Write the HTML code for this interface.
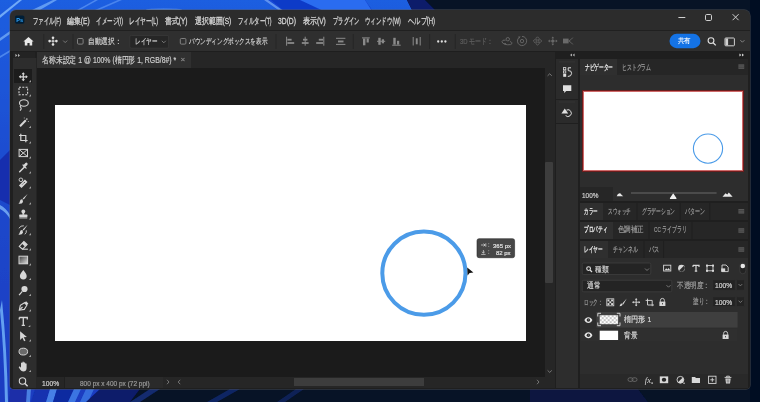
<!DOCTYPE html>
<html><head><meta charset="utf-8">
<style>
*{margin:0;padding:0;box-sizing:border-box}
html,body{width:760px;height:402px;overflow:hidden;background:#0b1730}
body{position:relative;font-family:"Liberation Sans",sans-serif}
.r{position:absolute}
.t{position:absolute;white-space:nowrap;line-height:1;transform-origin:0 0;-webkit-text-stroke:0.2px currentColor}
svg.i{position:absolute;overflow:visible}
</style></head><body>

<svg class="i" style="left:0;top:0" width="760" height="402" viewBox="0 0 760 402">
<defs>
<linearGradient id="wg" x1="0" y1="0" x2="0" y2="1"><stop offset="0" stop-color="#1f5ee0"/><stop offset="0.5" stop-color="#1c48cc"/><stop offset="1" stop-color="#1a3cc0"/></linearGradient>
<filter id="bl" x="-10%" y="-10%" width="120%" height="120%"><feGaussianBlur stdDeviation="0.7"/></filter>
</defs>
<rect width="760" height="402" fill="#071326"/>
<g filter="url(#bl)">
<polygon points="0,0 407,0 414,14 100,402 0,402" fill="url(#wg)"/>
<polygon points="264,0 365,0 374,14 283,14" fill="#1848d8"/>
<polygon points="271,0 365,0 372,10 283,10" fill="#0f3ac8"/>
<polygon points="300,0 365,0 374,14 330,14" fill="#2a6cf0"/>
<polygon points="407,0 425,0 439,14 414,14" fill="#0a1a6a"/>
<path d="M0,15 L19,0 L22,0 L0,18 Z" fill="#8cc4ff" opacity="0.75"/>
<path d="M30,11 L53,0 L57,0 L33,14 Z" fill="#8cc4ff" opacity="0.6"/>
<path d="M77,10 L95,0 L98,0 L80,10 Z" fill="#7ab4ff" opacity="0.5"/>
<path d="M95,10 L118,0 L122,0 L99,10 Z" fill="#7ab4ff" opacity="0.45"/>
<path d="M264,0 L268,0 L285,12 L281,12 Z" fill="#8cc4ff" opacity="0.6"/>
<ellipse cx="164" cy="10" rx="18" ry="1.6" fill="#8cc4ff" opacity="0.45"/>
<path d="M0,38 L10,31 L10,34 L0,41 Z" fill="#8cc4ff" opacity="0.6"/>
<path d="M0,56 L10,50 L10,52 L0,58 Z" fill="#7ab4ff" opacity="0.5"/>
<polygon points="0,160 10,150 10,205 0,200" fill="#142fae"/>
<path d="M0,205 Q6,208 10,215 L10,219 Q6,212 0,209 Z" fill="#8cc4ff" opacity="0.7"/>
<path d="M2,300 Q7,350 8,402 L5,402 Q4,350 0,310 Z" fill="#7cc0ff" opacity="0.75"/><polygon points="10,389 27,389 27,402 9,402" fill="#1a2fa8"/>
<path d="M27,389 L31,389 L30,402 L26,402 Z" fill="#6aaaf8" opacity="0.6"/>
<polygon points="35,389 50,389 46,402 31,402" fill="#1232b0"/>
<path d="M50,389 L57,389 L53,402 L46,402 Z" fill="#5a9cf5" opacity="0.7"/>
<polygon points="57,389 74,389 68,402 53,402" fill="#0e2aa0"/>
<path d="M74,389 L81,389 L75,402 L68,402 Z" fill="#4a8cf0" opacity="0.7"/>
<path d="M86,389 L94,389 L88,402 L80,402 Z" fill="#4a8cf0" opacity="0.6"/>
<polygon points="100,389 140,389 130,402 86,402" fill="#0a1a6a"/>
<path d="M140,402 L160,389 L150,389 L130,402 Z" fill="#1a3aa0" opacity="0.6"/>
<path d="M217,402 L240,389 L230,389 L207,402 Z" fill="#1a3aa0" opacity="0.5"/>
<path d="M285,402 L304,389 L296,389 L277,402 Z" fill="#1a3aa0" opacity="0.4"/>
<polygon points="530,389 638,389 648,402 530,402" fill="#08163f"/>
<polygon points="750,0 760,0 760,402 750,402" fill="#061122"/>
</g>
</svg>
<div class="r" style="left:10px;top:10px;width:740px;height:379px;background:#2c2c2c;border-radius:6px 6px 4px 4px;box-shadow:0 0 0 0.7px rgba(90,90,90,0.55);"></div>
<div class="r" style="left:10px;top:30px;width:740px;height:1px;background:#202020;"></div>
<div class="r" style="left:10px;top:31px;width:740px;height:20px;background:#2f2f2f;"></div>
<div class="r" style="left:10px;top:51px;width:740px;height:1px;background:#1e1e1e;"></div>
<div class="r" style="left:10px;top:52px;width:740px;height:337px;background:#1f1f1f;border-radius:0 0 4px 4px;"></div>
<div class="r" style="left:13px;top:52px;width:22px;height:6px;background:#232323;"></div>
<div class="r" style="left:13px;top:58px;width:23px;height:330px;background:#2d2d2d;"></div>
<div class="r" style="left:36px;top:58px;width:1.5px;height:319px;background:#242424;"></div>
<div class="r" style="left:14px;top:69px;width:18px;height:14px;background:#1c1c1c;"></div>
<div class="r" style="left:37px;top:52px;width:518px;height:16px;background:#262626;"></div>
<div class="r" style="left:37px;top:52px;width:154px;height:16px;background:#303030;"></div>
<div class="r" style="left:37px;top:68px;width:508px;height:309px;background:#1b1b1b;"></div>
<div class="r" style="left:55px;top:105px;width:471px;height:236px;background:#ffffff;"></div>
<div class="r" style="left:545px;top:68px;width:10px;height:309px;background:#262626;"></div>
<div class="r" style="left:545px;top:162px;width:8px;height:121px;background:#3d3d3d;border-radius:1px;"></div>
<div class="r" style="left:36px;top:377px;width:28px;height:11px;background:#262626;"></div>
<div class="r" style="left:65px;top:377px;width:98px;height:11px;background:#2a2a2a;"></div>
<div class="r" style="left:163px;top:377px;width:392px;height:11px;background:#262626;"></div>
<div class="r" style="left:294px;top:378px;width:130px;height:8px;background:#3d3d3d;"></div>
<div class="r" style="left:556px;top:59px;width:22px;height:40px;background:#2b2b2b;"></div>
<div class="r" style="left:556px;top:100px;width:22px;height:23px;background:#2b2b2b;"></div>
<div class="r" style="left:556px;top:124px;width:22px;height:264px;background:#2d2d2d;"></div>
<div class="r" style="left:580px;top:59px;width:168px;height:142px;background:#2d2d2d;"></div>
<div class="r" style="left:580px;top:59px;width:37px;height:16px;background:#2f2f2f;"></div>
<div class="r" style="left:617px;top:59px;width:38px;height:16px;background:#262626;"></div>
<div class="r" style="left:655px;top:59px;width:93px;height:16px;background:#262626;"></div>
<div class="r" style="left:581.6px;top:90px;width:162.6px;height:82.2px;background:#fff;border:1px solid #6e1c1c;box-shadow:inset 0 0 0 1px #cf6a6a;"></div>
<div class="r" style="left:580px;top:187px;width:33px;height:14px;background:#262626;"></div>
<div class="r" style="left:580px;top:203px;width:168px;height:17px;background:#262626;"></div>
<div class="r" style="left:580px;top:203px;width:23px;height:17px;background:#2f2f2f;"></div>
<div class="r" style="left:580px;top:222px;width:168px;height:17px;background:#262626;"></div>
<div class="r" style="left:580px;top:222px;width:33px;height:17px;background:#2f2f2f;"></div>
<div class="r" style="left:580px;top:241px;width:168px;height:17px;background:#262626;"></div>
<div class="r" style="left:580px;top:241px;width:28px;height:17px;background:#2f2f2f;"></div>
<div class="r" style="left:580px;top:258px;width:168px;height:116px;background:#2d2d2d;"></div>
<div class="r" style="left:580px;top:374px;width:168px;height:14px;background:#292929;"></div>
<svg class="i" style="left:0;top:0" width="760" height="402" viewBox="0 0 760 402"><g stroke="#d6d6d6" stroke-width="1.2" fill="none"><path d="M19.8,76.8 H26.8 M23.3,73.3 V80.3"/></g><g fill="#d6d6d6"><path d="M18.8,76.8 l2,-1.8 v3.6z M27.8,76.8 l-2,-1.8 v3.6z M23.3,72.3 l-1.8,2 h3.6z M23.3,81.3 l-1.8,-2 h3.6z"/></g><rect x="19.0" y="87.2" width="8.6" height="7.6" fill="none" stroke="#d6d6d6" stroke-width="1.1" stroke-dasharray="2 1.3"/><g fill="none" stroke="#d6d6d6" stroke-width="1.1"><ellipse cx="23.900000000000002" cy="103" rx="4.4" ry="3.3"/><path d="M20.7,105.4 q-1,1.6 0.2,2.4 q0.9,0.7 -0.9,2.8"/></g><g stroke="#d6d6d6" fill="none"><path d="M20.0,126.3 L25.8,120.3" stroke-width="2"/><path d="M26.8,118.3 v1.6 M26.0,119.1 h1.6 M27.9,121.5 h1 M24.3,117.5 v1" stroke-width="0.7"/></g><g fill="none" stroke="#d6d6d6" stroke-width="1.2"><path d="M20.8,133.7 V140.5 H27.6 M19.0,135.5 H25.8 V142.3"/></g><g fill="none" stroke="#d6d6d6" stroke-width="1"><rect x="19.1" y="149.4" width="8.4" height="7.2"/><path d="M19.1,149.4 L27.5,156.6 M27.5,149.4 L19.1,156.6"/></g><g stroke="#d6d6d6" fill="none" stroke-linecap="round"><path d="M19.7,171.8 L24.5,167" stroke-width="1.5"/><path d="M24.5,165.8 L26.3,164" stroke-width="2.6"/><path d="M23.0,165 L26.1,168.1" stroke-width="1.2"/></g><g fill="#d6d6d6"><path d="M18.9,185.4 L24.900000000000002,179.4 L27.5,182 L21.5,188 Z"/></g><circle cx="20.900000000000002" cy="179.8" r="1.8" fill="none" stroke="#d6d6d6" stroke-width="0.9"/><path d="M22.3,184.5 l1,-1 M23.900000000000002,183 l1,-1" stroke="#2b2b2b" stroke-width="0.8"/><g fill="#d6d6d6"><path d="M27.6,194 L23.8,199.6 L22.7,198.6 Z"/><path d="M22.5,199.2 q-2.2,-0.4 -2.6,2 q-0.3,1.8 -1.5,2.6 q3.6,0.4 4.6,-1.8 z"/></g><g fill="#d6d6d6"><circle cx="23.3" cy="211.4" r="1.9"/><rect x="22.400000000000002" y="212.8" width="1.8" height="2"/><rect x="19.1" y="214.6" width="8.4" height="2.4" rx="0.8"/><rect x="19.3" y="217.4" width="8" height="1"/></g><g fill="#d6d6d6"><path d="M27.6,224.8 L23.8,230.4 L22.7,229.4 Z"/><path d="M22.5,230.0 q-2.2,-0.4 -2.6,2 q-0.3,1.8 -1.5,2.6 q3.6,0.4 4.6,-1.8 z"/></g><path d="M18.8,228.3 q2,-3 5,-2.5 M26.3,230.3 q0.5,2.5 -1.5,4" stroke="#d6d6d6" stroke-width="0.9" fill="none"/><g fill="none" stroke="#d6d6d6" stroke-width="1.1"><path d="M19.3,246.4 L23.900000000000002,241.6 L27.1,244.6 L22.5,249.2 Z"/><path d="M22.5,249.2 H27.9"/></g><path d="M21.8,243.5 L23.900000000000002,241.6 L27.1,244.6 L24.900000000000002,246.6 Z" fill="#d6d6d6"/><defs><linearGradient id="tg" x1="0" y1="0" x2="1" y2="1"><stop offset="0" stop-color="#3a3a3a"/><stop offset="1" stop-color="#e0e0e0"/></linearGradient></defs><rect x="19.0" y="256.2" width="8.6" height="7.6" fill="url(#tg)" stroke="#d6d6d6" stroke-width="1"/><path d="M23.3,270.09999999999997 C24.8,272.2 26.7,274.2 26.7,276.09999999999997 A3.4,3.4 0 0 1 19.900000000000002,276.09999999999997 C19.900000000000002,274.2 21.8,272.2 23.3,270.09999999999997 Z" fill="#d6d6d6"/><circle cx="24.5" cy="289.0" r="3.1" fill="#d6d6d6"/><path d="M22.3,291.40000000000003 L19.1,295.20000000000005" stroke="#d6d6d6" stroke-width="1.2"/><g fill="none" stroke="#d6d6d6" stroke-width="1.1"><path d="M19.3,310.2 L20.3,305.4 L24.5,302.8 L26.900000000000002,305.2 L24.3,309.4 Z"/><path d="M19.3,310.2 L22.5,307"/></g><path d="M24.5,302.8 L26.1,301.2 L28.3,303.4 L26.900000000000002,305.2 Z" fill="#d6d6d6"/><path d="M19.3,317.5 H27.3 V319.5 M19.3,317.5 V319.5 M23.3,317.5 V325.3 M21.7,325.3 H24.900000000000002" stroke="#d6d6d6" stroke-width="1.3" fill="none"/><path d="M20.1,331.2 L26.900000000000002,337 L23.7,337.2 L25.5,340.6 L24.1,341.2 L22.400000000000002,337.8 L20.1,340 Z" fill="#d6d6d6"/><ellipse cx="23.3" cy="351.6" rx="4.3" ry="3.4" fill="#6a6a6a" stroke="#d6d6d6" stroke-width="1"/><path d="M18.700000000000003,367.3 L19.7,366.3 L21.0,367.7 L21.0,363.09999999999997 Q21.7,362.09999999999997 22.400000000000002,363.09999999999997 L22.400000000000002,362.09999999999997 Q23.1,361.09999999999997 23.8,362.09999999999997 L23.8,362.7 Q24.5,361.7 25.2,362.7 L25.2,363.7 Q25.900000000000002,362.7 26.6,363.7 L26.6,368.2 Q26.3,371.5 23.3,371.5 Q21.3,371.5 20.3,369.7 Z" fill="#d6d6d6"/><circle cx="22.5" cy="381" r="3.2" fill="none" stroke="#d6d6d6" stroke-width="1.1"/><path d="M24.7,383.3 L27.6,386.3" stroke="#d6d6d6" stroke-width="1.4"/><path d="M31.0,80.0 L31.0,82.2 L28.8,82.2 Z" fill="#a0a0a0"/><path d="M31.0,94.2 L31.0,96.4 L28.8,96.4 Z" fill="#a0a0a0"/><path d="M31.0,109.2 L31.0,111.4 L28.8,111.4 Z" fill="#a0a0a0"/><path d="M31.0,125.7 L31.0,127.9 L28.8,127.9 Z" fill="#a0a0a0"/><path d="M31.0,141.2 L31.0,143.39999999999998 L28.8,143.39999999999998 Z" fill="#a0a0a0"/><path d="M31.0,156.2 L31.0,158.39999999999998 L28.8,158.39999999999998 Z" fill="#a0a0a0"/><path d="M31.0,171.2 L31.0,173.39999999999998 L28.8,173.39999999999998 Z" fill="#a0a0a0"/><path d="M31.0,186.2 L31.0,188.39999999999998 L28.8,188.39999999999998 Z" fill="#a0a0a0"/><path d="M31.0,202.2 L31.0,204.39999999999998 L28.8,204.39999999999998 Z" fill="#a0a0a0"/><path d="M31.0,217.2 L31.0,219.39999999999998 L28.8,219.39999999999998 Z" fill="#a0a0a0"/><path d="M31.0,233.0 L31.0,235.2 L28.8,235.2 Z" fill="#a0a0a0"/><path d="M31.0,248.2 L31.0,250.39999999999998 L28.8,250.39999999999998 Z" fill="#a0a0a0"/><path d="M31.0,263.2 L31.0,265.4 L28.8,265.4 Z" fill="#a0a0a0"/><path d="M31.0,277.9 L31.0,280.09999999999997 L28.8,280.09999999999997 Z" fill="#a0a0a0"/><path d="M31.0,293.8 L31.0,296.0 L28.8,296.0 Z" fill="#a0a0a0"/><path d="M31.0,309.2 L31.0,311.4 L28.8,311.4 Z" fill="#a0a0a0"/><path d="M30.3,324.9 L30.3,327.09999999999997 L28.1,327.09999999999997 Z" fill="#a0a0a0"/><path d="M31.0,339.2 L31.0,341.4 L28.8,341.4 Z" fill="#a0a0a0"/><path d="M31.0,354.8 L31.0,357.0 L28.8,357.0 Z" fill="#a0a0a0"/><path d="M31.0,369.9 L31.0,372.09999999999997 L28.8,372.09999999999997 Z" fill="#a0a0a0"/><path d="M15.4,53.8 l2,1.6 l-2,1.6 Z M18,53.8 l2,1.6 l-2,1.6 Z" fill="#b0b0b0"/></svg>
<svg class="i" style="left:0;top:0" width="760" height="402" viewBox="0 0 760 402"><rect x="15" y="15.5" width="9.4" height="8.2" rx="1.6" fill="#001e36"/><text x="16.2" y="21.9" font-family="Liberation Sans" font-weight="bold" font-size="5.6" fill="#31a8ff">Ps</text><path d="M678.4,17.5 H685.3" stroke="#d0d0d0" stroke-width="1"/><rect x="705.5" y="14.5" width="6" height="6" rx="1.2" fill="none" stroke="#d0d0d0" stroke-width="1"/><path d="M732.6,14.2 L738.6,20.2 M738.6,14.2 L732.6,20.2" stroke="#d0d0d0" stroke-width="1"/><path d="M28.5,36.9 L33.6,41.6 L32.2,41.6 L32.2,45.6 L29.6,45.6 L29.6,43 L27.4,43 L27.4,45.6 L24.8,45.6 L24.8,41.6 L23.4,41.6 Z" fill="#e8e8e8"/><path d="M43.8,34 V49" stroke="#262626" stroke-width="1"/><path d="M73,34 V49" stroke="#262626" stroke-width="1"/><path d="M276,34 V49" stroke="#262626" stroke-width="1"/><path d="M353.3,34 V49" stroke="#262626" stroke-width="1"/><path d="M429.7,34 V49" stroke="#262626" stroke-width="1"/><path d="M455.3,34 V49" stroke="#262626" stroke-width="1"/><g stroke="#d8d8d8" stroke-width="0.7" fill="none"><path d="M49.6,41.1 H56.4 M53,37.7 V44.5"/></g><g fill="#e0e0e0"><circle cx="49.6" cy="41.1" r="1.3"/><circle cx="56.4" cy="41.1" r="1.3"/><circle cx="53" cy="37.7" r="1.3"/><circle cx="53" cy="44.5" r="1.3"/><circle cx="53" cy="41.1" r="0.9"/></g><path d="M63.2,40.6 L65.2,42.6 L67.2,40.6" stroke="#8a8a8a" stroke-width="0.8" fill="none"/><rect x="77.5" y="38.5" width="5.6" height="5.6" rx="1" fill="none" stroke="#8a8a8a" stroke-width="0.9"/><rect x="180.3" y="38.5" width="5.6" height="5.6" rx="1" fill="none" stroke="#8a8a8a" stroke-width="0.9"/><rect x="129.8" y="35.4" width="38.8" height="12.8" rx="1.5" fill="#262626" stroke="#3a3a3a" stroke-width="0.8"/><path d="M161.8,40.8 L163.8,42.8 L165.8,40.8" stroke="#8a8a8a" stroke-width="0.8" fill="none"/><path d="M286.6,36.7 V45.7" stroke="#8a8a8a" stroke-width="1"/><rect x="287.40000000000003" y="38.8" width="4.2" height="1.8" fill="#8a8a8a"/><rect x="287.40000000000003" y="42.1" width="6.8" height="1.8" fill="#8a8a8a"/><path d="M305.2,36.7 V45.7" stroke="#8a8a8a" stroke-width="1"/><rect x="303" y="38.8" width="4.4" height="1.8" fill="#8a8a8a"/><rect x="301.8" y="42.1" width="6.8" height="1.8" fill="#8a8a8a"/><path d="M323.8,36.7 V45.7" stroke="#8a8a8a" stroke-width="1"/><rect x="318.8" y="38.8" width="4.2" height="1.8" fill="#8a8a8a"/><rect x="316.2" y="42.1" width="6.8" height="1.8" fill="#8a8a8a"/><path d="M336,38.3 H345.4 M336,44.4 H345.4" stroke="#8a8a8a" stroke-width="1"/><rect x="338" y="40.5" width="5.5" height="1.9" fill="#8a8a8a"/><path d="M362,37.9 H369.8" stroke="#8a8a8a" stroke-width="1"/><rect x="363" y="38.5" width="2.4" height="6.8" fill="#8a8a8a"/><rect x="366.6" y="38.5" width="2.2" height="4" fill="#8a8a8a"/><path d="M377,41.3 H385.2" stroke="#8a8a8a" stroke-width="1"/><rect x="378.3" y="37.8" width="2.4" height="7" fill="#8a8a8a"/><rect x="381.8" y="39.3" width="2.2" height="4" fill="#8a8a8a"/><path d="M392.2,45.2 H400.7" stroke="#8a8a8a" stroke-width="1"/><rect x="393.3" y="37.8" width="2.4" height="6.8" fill="#8a8a8a"/><rect x="397" y="40.8" width="2.2" height="3.8" fill="#8a8a8a"/><path d="M413.2,37 V45.5 M420.2,37 V45.5" stroke="#8a8a8a" stroke-width="1"/><rect x="415.8" y="38.3" width="1.9" height="6" fill="#8a8a8a"/><circle cx="438.2" cy="41.5" r="1.15" fill="#e0e0e0"/><circle cx="441.8" cy="41.5" r="1.15" fill="#e0e0e0"/><circle cx="445.4" cy="41.5" r="1.15" fill="#e0e0e0"/><g fill="none" stroke="#6a6a6a" stroke-width="0.9"><circle cx="507.8" cy="39.2" r="1.7"/><path d="M505.6,40.2 q-3.4,-0.6 -3.6,1.4 q0,1.6 2.6,2.6 q3,1 6,0.4 q1.8,-0.6 1.2,-2 q-0.4,-0.8 -1.8,-1"/></g><path d="M504,43 l2.2,0.2 l-1.2,1.8z" fill="#6a6a6a"/><g fill="none" stroke="#6a6a6a" stroke-width="0.9"><path d="M519.2,37.4 A4.6,4.6 0 1 0 522,36.4"/><circle cx="522" cy="41.1" r="1.7"/></g><path d="M518.2,36.4 l2.4,0.2 l-1.4,2z" fill="#6a6a6a"/><g fill="none" stroke="#6a6a6a" stroke-width="0.8"><path d="M537.5,36.8 l1.7,1.7 l-1.7,1.7 l-1.7,-1.7z M537.5,41.8 l1.7,1.7 l-1.7,1.7 l-1.7,-1.7z M535,39.3 l1.7,1.7 l-1.7,1.7 l-1.7,-1.7z M540,39.3 l1.7,1.7 l-1.7,1.7 l-1.7,-1.7z"/></g><g fill="#6a6a6a"><circle cx="552.8" cy="41" r="1.6"/><path d="M552.8,36.4 l-1.4,1.8 h2.8z M552.8,45.6 l-1.4,-1.8 h2.8z M548,41 l1.8,-1.4 v2.8z M557.6,41 l-1.8,-1.4 v2.8z"/></g><path d="M549.5,41 H556 M552.8,38 V44" stroke="#6a6a6a" stroke-width="0.6"/><rect x="563" y="38.6" width="5.6" height="4.8" fill="#6a6a6a"/><path d="M568.8,41 l2.6,-1.8 l1.4,-1.6 M568.8,41 l2.6,1.8 l1.4,1.6" stroke="#6a6a6a" stroke-width="0.8" fill="none"/><rect x="669.5" y="33.8" width="31" height="14.4" rx="7.2" fill="#1473e6"/><circle cx="711" cy="40.6" r="2.9" fill="none" stroke="#e0e0e0" stroke-width="1.1"/><path d="M713.1,42.7 L715.8,45.4" stroke="#e0e0e0" stroke-width="1.3"/><rect x="725" y="38" width="9.4" height="7.8" rx="0.8" fill="none" stroke="#d0d0d0" stroke-width="1"/><rect x="725.5" y="38.5" width="2.6" height="6.8" fill="#d0d0d0"/><path d="M740.4,40.2 L742.4,42.2 L744.4,40.2" stroke="#9a9a9a" stroke-width="0.8" fill="none"/><path d="M574.6,53.4 l-2,1.6 l2,1.6 Z M572,53.4 l-2,1.6 l2,1.6 Z" fill="#b0b0b0"/><path d="M739.4,53.4 l2,1.6 l-2,1.6 Z M742,53.4 l2,1.6 l-2,1.6 Z" fill="#d0d0d0"/><rect x="738.4" y="64.39999999999999" width="5.8" height="4.4" fill="#5e5e5e"/><path d="M738.3,65.89999999999999 H744.3 M738.3,67.35 H744.3" stroke="#2d2d2d" stroke-width="0.55"/><rect x="738.4" y="209.10000000000002" width="5.8" height="4.4" fill="#5e5e5e"/><path d="M738.3,210.60000000000002 H744.3 M738.3,212.05 H744.3" stroke="#2d2d2d" stroke-width="0.55"/><rect x="738.4" y="228.3" width="5.8" height="4.4" fill="#5e5e5e"/><path d="M738.3,229.8 H744.3 M738.3,231.25 H744.3" stroke="#2d2d2d" stroke-width="0.55"/><rect x="738.4" y="247.3" width="5.8" height="4.4" fill="#5e5e5e"/><path d="M738.3,248.8 H744.3 M738.3,250.25 H744.3" stroke="#2d2d2d" stroke-width="0.55"/><path d="M547.6,75.8 L549.7,73.8 L551.8,75.8" stroke="#8a8a8a" stroke-width="0.8" fill="none"/><path d="M547.6,370.4 L549.7,372.4 L551.8,370.4" stroke="#8a8a8a" stroke-width="0.8" fill="none"/><path d="M167,379.8 L169,382 L167,384.2" stroke="#8a8a8a" stroke-width="0.8" fill="none"/><path d="M180.2,379.8 L178.2,382 L180.2,384.2" stroke="#8a8a8a" stroke-width="0.8" fill="none"/><path d="M537,379.8 L539,382 L537,384.2" stroke="#8a8a8a" stroke-width="0.8" fill="none"/><path d="M559,61.9 H575 M559,102 H575" stroke="#3a3a3a" stroke-width="0.6"/><g fill="none" stroke="#e0e0e0" stroke-width="0.8"><rect x="563.6" y="67.6" width="2.2" height="2.2"/><rect x="563.6" y="70.9" width="2.2" height="2.2"/></g><rect x="563.2" y="74" width="3" height="2.8" fill="#e0e0e0"/><path d="M571,67.8 H568.2 V70.6 Q571.8,70.4 571.6,73.4 Q571.4,76.5 567.8,76.5" stroke="#e0e0e0" stroke-width="1" fill="none"/><path d="M563,85.2 H571.3 V91 H566.2 L564.2,93 V91 H563 Z" fill="#e0e0e0"/><path d="M566.6,110 A3.4,3.4 0 1 1 565.6,115.6" fill="none" stroke="#e0e0e0" stroke-width="1"/><path d="M564.8,108.4 L568.2,113.6 L561.4,113.6 Z" fill="#e0e0e0"/><circle cx="708" cy="148.6" r="14.6" fill="none" stroke="#4b9be8" stroke-width="1.1"/><path d="M616.7,196.3 q1,-2.5 2.2,-2.8 q1.6,-0.6 2.4,1 q1,1 2,1.8 z" fill="#e8e8e8"/><path d="M631,193 H716.6" stroke="#6a6a6a" stroke-width="1.1"/><path d="M673.2,194.2 L675.9,198.4 L670.5,198.4 Z" fill="#f0f0f0" stroke="#f0f0f0" stroke-width="1.2" stroke-linejoin="round"/><path d="M722.5,196.8 L725.5,193.2 L727.3,194.5 L728.8,192.4 L732.6,196.8 Z" fill="#e8e8e8"/><path d="M637,203 V220" stroke="#1f1f1f" stroke-width="1"/><path d="M680.2,203 V220" stroke="#1f1f1f" stroke-width="1"/><path d="M709.7,203 V220" stroke="#1f1f1f" stroke-width="1"/><path d="M649,222 V239" stroke="#1f1f1f" stroke-width="1"/><path d="M692,222 V239" stroke="#1f1f1f" stroke-width="1"/><path d="M644,241 V258" stroke="#1f1f1f" stroke-width="1"/><path d="M663.6,241 V258" stroke="#1f1f1f" stroke-width="1"/><rect x="582.2" y="263" width="68.6" height="11.6" rx="1.5" fill="#242424" stroke="#404040" stroke-width="0.8"/><circle cx="588.6" cy="268.6" r="1.9" fill="none" stroke="#e0e0e0" stroke-width="1.1"/><path d="M590,270 L592,272" stroke="#e0e0e0" stroke-width="1.2"/><path d="M645.0,268.5 L647,270.5 L649.0,268.5" stroke="#8a8a8a" stroke-width="0.8" fill="none"/><rect x="582.2" y="280.2" width="89.6" height="11.6" rx="1.5" fill="#242424" stroke="#404040" stroke-width="0.8"/><path d="M666.5,285.2 L668.5,287.2 L670.5,285.2" stroke="#8a8a8a" stroke-width="0.8" fill="none"/><rect x="712.8" y="279.8" width="22.4" height="10.399999999999977" rx="1" fill="#232323" stroke="#333" stroke-width="0.6"/><rect x="736.4" y="279.8" width="8" height="10.399999999999977" rx="1" fill="#232323" stroke="#333" stroke-width="0.6"/><path d="M738.6,284.1 L740.4,285.9 L742.1999999999999,284.1" stroke="#8a8a8a" stroke-width="0.8" fill="none"/><rect x="712.8" y="296.8" width="22.4" height="9.599999999999966" rx="1" fill="#232323" stroke="#333" stroke-width="0.6"/><rect x="736.4" y="296.8" width="8" height="9.599999999999966" rx="1" fill="#232323" stroke="#333" stroke-width="0.6"/><path d="M738.6,300.70000000000005 L740.4,302.5 L742.1999999999999,300.70000000000005" stroke="#8a8a8a" stroke-width="0.8" fill="none"/><rect x="663.6" y="265.2" width="7.2" height="5.8" fill="none" stroke="#d8d8d8" stroke-width="0.9"/><path d="M664.6,270.3 l1.6,-2 l1.2,1.2 l1.2,-1.5 l1.6,2.3 z" fill="#d8d8d8"/><circle cx="681.5" cy="268.2" r="3.4" fill="#d8d8d8"/><path d="M683.9,265.8 A3.4,3.4 0 0 1 679.1,270.6 Z" fill="#2d2d2d"/><path d="M693,265.3 H699 V267 M693,265.3 V267 M696,265.3 V271.2 M694.8,271.2 H697.2" stroke="#d8d8d8" stroke-width="1.2" fill="none"/><rect x="707" y="265.6" width="6" height="5.2" fill="none" stroke="#d8d8d8" stroke-width="0.9"/><g fill="#d8d8d8"><rect x="706" y="264.6" width="2" height="2"/><rect x="712" y="264.6" width="2" height="2"/><rect x="706" y="269.8" width="2" height="2"/><rect x="712" y="269.8" width="2" height="2"/></g><path d="M722,265 H726 L728.2,267.2 V271.6 H722 Z" fill="none" stroke="#d8d8d8" stroke-width="0.9"/><rect x="721.2" y="268.4" width="4" height="3.4" fill="#d8d8d8"/><rect x="739.8" y="263" width="6" height="10.8" rx="3" fill="#232323" stroke="#444" stroke-width="0.6"/><circle cx="742.8" cy="266" r="2.3" fill="#e8e8e8"/><rect x="606.8" y="298.8" width="7" height="7" fill="none" stroke="#d8d8d8" stroke-width="0.8"/><g fill="#d8d8d8"><rect x="607.5" y="299.5" width="1.9" height="1.9"/><rect x="611.1" y="299.5" width="1.9" height="1.9"/><rect x="609.3" y="301.3" width="1.9" height="1.9"/><rect x="607.5" y="303.1" width="1.9" height="1.9"/><rect x="611.1" y="303.1" width="1.9" height="1.9"/></g><path d="M626.8,298.6 L622.3,303.5 L623.3,304.4 Z" fill="#d8d8d8"/><path d="M622,303.6 q-1.6,0 -1.9,1.4 q-0.2,0.8 -0.8,1.1 q2.6,0.3 3.4,-1.5 z" fill="#d8d8d8"/><path d="M632.6,302.2 H639.8 M636.2,298.6 V305.8" stroke="#d8d8d8" stroke-width="0.9"/><g fill="#d8d8d8"><path d="M632.2,302.2 l1.5,-1.3 v2.6z M640.2,302.2 l-1.5,-1.3 v2.6z M636.2,298.2 l-1.3,1.5 h2.6z M636.2,306.2 l-1.3,-1.5 h2.6z"/></g><path d="M647.5,298.6 V305 H654 M645.6,300.4 H652.2 V306.2" stroke="#d8d8d8" stroke-width="0.9" fill="none"/><path d="M660.4,301.79999999999995 V300.4 A2,2 0 0 1 664.4,300.4 V301.79999999999995" stroke="#d8d8d8" stroke-width="0.9" fill="none"/><rect x="659.4" y="301.59999999999997" width="6" height="4.4" fill="#d8d8d8"/><rect x="662.0" y="303.0" width="0.8" height="1.4" fill="#2d2d2d"/><rect x="596.4" y="312" width="141.2" height="15.6" fill="#3f3f3f"/><rect x="580.4" y="328.2" width="157.2" height="13.6" fill="#2f2f2f"/><path d="M584.4,320.1 C585.8,316.20000000000005 591.0,316.20000000000005 592.4,320.1 C591.0,324.0 585.8,324.0 584.4,320.1 Z" fill="#e6e6e6"/><circle cx="588.4" cy="320.1" r="1.75" fill="#2a2a2a"/><circle cx="588.6999999999999" cy="319.8" r="0.5" fill="#9a9a9a"/><path d="M584.4,335.3 C585.8,331.40000000000003 591.0,331.40000000000003 592.4,335.3 C591.0,339.2 585.8,339.2 584.4,335.3 Z" fill="#e6e6e6"/><circle cx="588.4" cy="335.3" r="1.75" fill="#2a2a2a"/><circle cx="588.6999999999999" cy="335.0" r="0.5" fill="#9a9a9a"/><defs><pattern id="ck" x="599.7" y="315.2" width="4" height="4" patternUnits="userSpaceOnUse"><rect width="4" height="4" fill="#ffffff"/><rect width="2" height="2" fill="#c4c4c4"/><rect x="2" y="2" width="2" height="2" fill="#c4c4c4"/></pattern></defs><rect x="599.7" y="315.2" width="18.4" height="9" fill="url(#ck)"/><path d="M597.8,316.5 V313.3 H601 M616.8,313.3 H620 V316.5 M620,322.5 V325.7 H616.8 M601,325.7 H597.8 V322.5" stroke="#e0e0e0" stroke-width="0.9" fill="none"/><rect x="599.7" y="330.7" width="18.4" height="9.3" fill="#ffffff"/><path d="M723.6,334.79999999999995 V333.4 A2,2 0 0 1 727.6,333.4 V334.79999999999995" stroke="#d8d8d8" stroke-width="0.9" fill="none"/><rect x="722.6" y="334.59999999999997" width="6" height="4.4" fill="#d8d8d8"/><rect x="725.2" y="336.0" width="0.8" height="1.4" fill="#2d2d2d"/><g fill="none" stroke="#6a6a6a" stroke-width="0.9"><rect x="628" y="377.8" width="5" height="3.6" rx="1.8"/><rect x="632" y="377.8" width="5" height="3.6" rx="1.8"/></g><text x="644.8" y="383.4" font-family="Liberation Serif" font-style="italic" font-size="8.5" fill="#d8d8d8">fx</text><rect x="651.4" y="382.4" width="1.4" height="1.4" fill="#d8d8d8"/><rect x="659.8" y="376.4" width="8.4" height="6.8" fill="#d8d8d8"/><ellipse cx="664" cy="379.8" rx="2.2" ry="2" fill="#262626"/><circle cx="680.4" cy="379.8" r="3.4" fill="none" stroke="#d8d8d8" stroke-width="0.9"/><path d="M682.8,377.4 A3.4,3.4 0 0 1 678,382.2 Z" fill="#d8d8d8"/><rect x="683.4" y="382.6" width="1.3" height="1.3" fill="#d8d8d8"/><path d="M691.8,377 H695 L696,378 H700 V383 H691.8 Z" fill="#d8d8d8"/><rect x="708.6" y="376.2" width="7.4" height="7.2" fill="none" stroke="#d8d8d8" stroke-width="0.9"/><path d="M712.3,377.8 V381.8 M710.3,379.8 H714.3" stroke="#d8d8d8" stroke-width="0.9"/><path d="M724.6,377.4 H731.4 M726.6,377.2 V376.2 H729.4 V377.2" stroke="#d8d8d8" stroke-width="0.9" fill="none"/><path d="M725.4,378.4 H730.6 L730,383.6 H726 Z" fill="#d8d8d8"/><path d="M727.2,379.4 V382.6 M728.8,379.4 V382.6" stroke="#262626" stroke-width="0.5"/><circle cx="423.9" cy="273.2" r="41.6" fill="none" stroke="#4b9be8" stroke-width="4"/><rect x="477" y="238.7" width="37.6" height="19" rx="2" fill="#474747" stroke="#2a2a2a" stroke-width="0.6"/><path d="M481,245 H485 M483.6,243.6 L485,245 L483.6,246.4 M485.8,243.3 V246.7" stroke="#e0e0e0" stroke-width="0.7" fill="none"/><circle cx="488.8" cy="243.8" r="0.45" fill="#e0e0e0"/><circle cx="488.8" cy="246.2" r="0.45" fill="#e0e0e0"/><path d="M483.4,250 V253 M482,251.8 L483.4,253.2 L484.8,251.8 M481.2,254.4 H485.6" stroke="#e0e0e0" stroke-width="0.7" fill="none"/><circle cx="488.8" cy="250.8" r="0.45" fill="#e0e0e0"/><circle cx="488.8" cy="253.2" r="0.45" fill="#e0e0e0"/><path d="M467.2,267.4 L473.4,272.6 L469.6,273 L467.6,275.4 Z" fill="#111"/></svg>
<div class="t" id="t0" style="left:32.6px;top:16.5px;font-size:8.5px;color:#d4d4d4;transform:scaleX(0.5975);-webkit-text-stroke:0.3px currentColor;">ファイル(F)</div>
<div class="t" id="t1" style="left:67.1px;top:16.5px;font-size:8.5px;color:#d4d4d4;transform:scaleX(0.7702);-webkit-text-stroke:0.3px currentColor;">編集(E)</div>
<div class="t" id="t2" style="left:96px;top:16.5px;font-size:8.5px;color:#d4d4d4;transform:scaleX(0.6132);-webkit-text-stroke:0.3px currentColor;">イメージ(I)</div>
<div class="t" id="t3" style="left:129.4px;top:16.5px;font-size:8.5px;color:#d4d4d4;transform:scaleX(0.6251);-webkit-text-stroke:0.3px currentColor;">レイヤー(L)</div>
<div class="t" id="t4" style="left:165px;top:16.5px;font-size:8.5px;color:#d4d4d4;transform:scaleX(0.7634);-webkit-text-stroke:0.3px currentColor;">書式(Y)</div>
<div class="t" id="t5" style="left:194.7px;top:16.5px;font-size:8.5px;color:#d4d4d4;transform:scaleX(0.7667);-webkit-text-stroke:0.3px currentColor;">選択範囲(S)</div>
<div class="t" id="t6" style="left:238px;top:16.5px;font-size:8.5px;color:#d4d4d4;transform:scaleX(0.5997);-webkit-text-stroke:0.3px currentColor;">フィルター(T)</div>
<div class="t" id="t7" style="left:277.8px;top:16.5px;font-size:8.5px;color:#d4d4d4;transform:scaleX(0.7939);-webkit-text-stroke:0.3px currentColor;">3D(D)</div>
<div class="t" id="t8" style="left:303px;top:16.5px;font-size:8.5px;color:#d4d4d4;transform:scaleX(0.7770);-webkit-text-stroke:0.3px currentColor;">表示(V)</div>
<div class="t" id="t9" style="left:332.7px;top:16.5px;font-size:8.5px;color:#d4d4d4;transform:scaleX(0.5844);-webkit-text-stroke:0.3px currentColor;">プラグイン</div>
<div class="t" id="t10" style="left:365.2px;top:16.5px;font-size:8.5px;color:#d4d4d4;transform:scaleX(0.6100);-webkit-text-stroke:0.3px currentColor;">ウィンドウ(W)</div>
<div class="t" id="t11" style="left:407.9px;top:16.5px;font-size:8.5px;color:#d4d4d4;transform:scaleX(0.6957);-webkit-text-stroke:0.3px currentColor;">ヘルプ(H)</div>
<div class="t" id="t12" style="left:87.5px;top:37.5px;font-size:8px;color:#cfcfcf;transform:scaleX(0.8350);">自動選択：</div>
<div class="t" id="t13" style="left:134.8px;top:37.5px;font-size:8px;color:#cfcfcf;transform:scaleX(0.6937);">レイヤー</div>
<div class="t" id="t14" style="left:189px;top:37.5px;font-size:8px;color:#cfcfcf;transform:scaleX(0.6982);">バウンディングボックスを表示</div>
<div class="t" id="t15" style="left:460px;top:37.5px;font-size:8px;color:#5e5e5e;transform:scaleX(0.7424);">3D モード：</div>
<div class="t" id="t16" style="left:677.8px;top:37.2px;font-size:7px;color:#ffffff;transform:scaleX(0.9143);-webkit-text-stroke:0.1px currentColor;">共有</div>
<div class="t" id="t17" style="left:42.3px;top:55.6px;font-size:8.6px;color:#cfcfcf;transform:scaleX(0.7638);">名称未設定<span style="font-size:9px"> 1 @ 100% (</span>楕円形<span style="font-size:9px"> 1, RGB/8#) *</span></div>
<div class="t" id="t18" style="left:180.5px;top:55.5px;font-size:8px;color:#8a8a8a;">×</div>
<div class="t" id="t19" style="left:584.6px;top:63.6px;font-size:7.5px;color:#e6e6e6;transform:scaleX(0.5812);-webkit-text-stroke:0.3px currentColor;">ナビゲーター</div>
<div class="t" id="t20" style="left:622px;top:63.6px;font-size:7.5px;color:#9a9a9a;transform:scaleX(0.6042);">ヒストグラム</div>
<div class="t" id="t21" style="left:582.2px;top:191.5px;font-size:7px;color:#cfcfcf;transform:scaleX(0.9159);">100%</div>
<div class="t" id="t22" style="left:584.4px;top:207.5px;font-size:7.5px;color:#e6e6e6;transform:scaleX(0.5625);-webkit-text-stroke:0.3px currentColor;">カラー</div>
<div class="t" id="t23" style="left:608.4px;top:207.5px;font-size:7.5px;color:#9a9a9a;transform:scaleX(0.5750);">スウォッチ</div>
<div class="t" id="t24" style="left:642px;top:207.5px;font-size:7.5px;color:#9a9a9a;transform:scaleX(0.5929);">グラデーション</div>
<div class="t" id="t25" style="left:684.8px;top:207.5px;font-size:7.5px;color:#9a9a9a;transform:scaleX(0.6219);">パターン</div>
<div class="t" id="t26" style="left:584.4px;top:226px;font-size:7.5px;color:#e6e6e6;transform:scaleX(0.5850);-webkit-text-stroke:0.3px currentColor;">プロパティ</div>
<div class="t" id="t27" style="left:618.1px;top:226px;font-size:7.5px;color:#9a9a9a;transform:scaleX(0.8094);">色調補正</div>
<div class="t" id="t28" style="left:654.4px;top:226px;font-size:7.5px;color:#9a9a9a;transform:scaleX(0.6273);">CC ライブラリ</div>
<div class="t" id="t29" style="left:584.4px;top:245.5px;font-size:7.5px;color:#e6e6e6;transform:scaleX(0.5781);-webkit-text-stroke:0.3px currentColor;">レイヤー</div>
<div class="t" id="t30" style="left:613.4px;top:245.5px;font-size:7.5px;color:#9a9a9a;transform:scaleX(0.6250);">チャンネル</div>
<div class="t" id="t31" style="left:648.9px;top:245.5px;font-size:7.5px;color:#9a9a9a;transform:scaleX(0.6312);">パス</div>
<div class="t" id="t32" style="left:595px;top:265.5px;font-size:7.5px;color:#cfcfcf;transform:scaleX(0.8500);">種類</div>
<div class="t" id="t33" style="left:586.6px;top:282px;font-size:7.5px;color:#cfcfcf;transform:scaleX(0.8375);">通常</div>
<div class="t" id="t34" style="left:677px;top:281.5px;font-size:7.5px;color:#9a9a9a;transform:scaleX(0.8225);">不透明度：</div>
<div class="t" id="t35" style="left:715px;top:281.5px;font-size:7px;color:#d4d4d4;transform:scaleX(0.9550);">100%</div>
<div class="t" id="t36" style="left:583.6px;top:299px;font-size:7.5px;color:#9a9a9a;transform:scaleX(0.5656);">ロック：</div>
<div class="t" id="t37" style="left:693.4px;top:298px;font-size:7.5px;color:#9a9a9a;transform:scaleX(0.6875);">塗り：</div>
<div class="t" id="t38" style="left:715px;top:298.5px;font-size:7px;color:#d4d4d4;transform:scaleX(0.9550);">100%</div>
<div class="t" id="t39" style="left:623.8px;top:316px;font-size:7.5px;color:#d8d8d8;transform:scaleX(0.8987);">楕円形 1</div>
<div class="t" id="t40" style="left:624px;top:331.5px;font-size:7.5px;color:#d8d8d8;transform:scaleX(0.8250);">背景</div>
<div class="t" id="t41" style="left:41.8px;top:379.5px;font-size:7px;color:#cfcfcf;transform:scaleX(0.9606);">100%</div>
<div class="t" id="t42" style="left:80px;top:379.5px;font-size:7px;color:#9a9a9a;transform:scaleX(0.9280);">800 px x 400 px (72 ppi)</div>
<div class="t" id="t43" style="left:493px;top:242.5px;font-size:6px;color:#e0e0e0;">365 px</div>
<div class="t" id="t44" style="left:496.4px;top:249.5px;font-size:6px;color:#e0e0e0;transform:scaleX(0.9940);">82 px</div>
</body></html>
